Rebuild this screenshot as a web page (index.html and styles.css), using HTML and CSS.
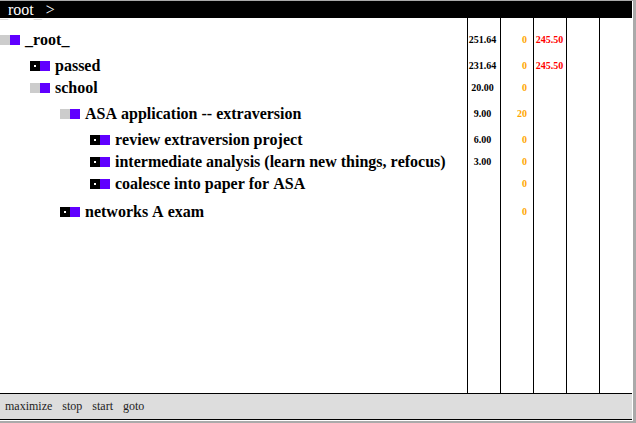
FILE: index.html
```html
<!DOCTYPE html>
<html lang="en">
<head>
    <meta charset="UTF-8">
    <meta name="viewport" content="width=device-width, initial-scale=1.0">
    <title>root</title>
    <link rel="stylesheet" href="styles.css">
</head>
<body>
    <div class="app">
        <div class="crumbs"><span class="crumb-us">_</span>root<span class="crumb-us">_</span> <span class="crumb-sep">&gt;</span></div>

        <div class="tree">
            <div class="row row-first">
                <div class="name"><span class="box box-open"></span><span class="box box-blue"></span><span class="label">_root_</span></div>
                <div class="cell num">251.64</div>
                <div class="cell zero">0</div>
                <div class="cell over">245.50</div>
                <div class="cell"></div>
                <div class="cell"></div>
            </div>
            <div class="row">
                <div class="name indent1"><span class="box box-leaf"></span><span class="box box-blue"></span><span class="label">passed</span></div>
                <div class="cell num">231.64</div>
                <div class="cell zero">0</div>
                <div class="cell over">245.50</div>
                <div class="cell"></div>
                <div class="cell"></div>
            </div>
            <div class="row">
                <div class="name indent1"><span class="box box-open"></span><span class="box box-blue"></span><span class="label">school</span></div>
                <div class="cell num">20.00</div>
                <div class="cell zero">0</div>
                <div class="cell"></div>
                <div class="cell"></div>
                <div class="cell"></div>
            </div>
            <div class="row row-gap4">
                <div class="name indent2"><span class="box box-open"></span><span class="box box-blue"></span><span class="label">ASA application -- extraversion</span></div>
                <div class="cell num">9.00</div>
                <div class="cell zero">20</div>
                <div class="cell"></div>
                <div class="cell"></div>
                <div class="cell"></div>
            </div>
            <div class="row row-gap4">
                <div class="name indent3"><span class="box box-leaf"></span><span class="box box-blue"></span><span class="label">review extraversion project</span></div>
                <div class="cell num">6.00</div>
                <div class="cell zero">0</div>
                <div class="cell"></div>
                <div class="cell"></div>
                <div class="cell"></div>
            </div>
            <div class="row">
                <div class="name indent3"><span class="box box-leaf"></span><span class="box box-blue"></span><span class="label">intermediate analysis (learn new things, refocus)</span></div>
                <div class="cell num">3.00</div>
                <div class="cell zero">0</div>
                <div class="cell"></div>
                <div class="cell"></div>
                <div class="cell"></div>
            </div>
            <div class="row">
                <div class="name indent3"><span class="box box-leaf"></span><span class="box box-blue"></span><span class="label">coalesce into paper for ASA</span></div>
                <div class="cell num"></div>
                <div class="cell zero">0</div>
                <div class="cell"></div>
                <div class="cell"></div>
                <div class="cell"></div>
            </div>
            <div class="row row-gap6">
                <div class="name indent2"><span class="box box-leaf"></span><span class="box box-blue"></span><span class="label">networks A exam</span></div>
                <div class="cell num"></div>
                <div class="cell zero">0</div>
                <div class="cell"></div>
                <div class="cell"></div>
                <div class="cell"></div>
            </div>
            <div class="row row-fill">
                <div class="name"></div>
                <div class="cell"></div>
                <div class="cell"></div>
                <div class="cell"></div>
                <div class="cell"></div>
                <div class="cell"></div>
            </div>
        </div>

        <div class="footer">
            <span>maximize</span>
            <span>stop</span>
            <span>start</span>
            <span>goto</span>
        </div>
    </div>
</body>
</html>
```

FILE: styles.css
```css
html, body {
    height: 100%;
    margin: 0;
}
body {
    background-color: #aaa;
    font-family: "Liberation Serif", "Times New Roman", serif;
    font-kerning: none;
    padding: 1px 3px 2px 0;
    box-sizing: border-box;
    overflow: hidden;
}
.app {
    display: flex;
    flex-direction: column;
    height: 100%;
    background: #fff;
    border-right: 1px solid #fff;
    border-bottom: 1px solid #fff;
    box-sizing: border-box;
}
.crumbs {
    height: 17px;
    line-height: 18px;
    background: #000;
    color: #fff;
    font-size: 16px;
    white-space: pre;
}
/* underscores hang just under the black bar */
.crumb-us {
    position: relative;
    top: 3px;
    color: #ddd;
}
.tree {
    flex: 1;
    display: flex;
    flex-direction: column;
    min-height: 0;
}
.row {
    display: flex;
    flex: none;
    height: 22px;
}
.row-first {
    height: 37px;
}
.row-first .name {
    padding-top: 11px;
    padding-bottom: 4px;
}
.row-first .cell {
    padding-top: 10px;
    padding-bottom: 5px;
}
.row-gap4 {
    height: 26px;
}
.row-gap4 .name {
    padding-top: 4px;
}
.row-gap4 .cell {
    padding-top: 4px;
}
.row-gap6 {
    height: 28px;
}
.row-gap6 .name {
    padding-top: 6px;
}
.row-gap6 .cell {
    padding-top: 6px;
}
.row-fill {
    flex: 1;
}
.name {
    flex: 1;
    display: flex;
    align-items: center;
    min-width: 0;
    font-size: 16px;
    font-weight: bold;
    color: #000;
    white-space: nowrap;
}
.indent1 { padding-left: 30px; }
.indent2 { padding-left: 60px; }
.indent3 { padding-left: 90px; }
.box {
    flex: none;
    width: 10px;
    height: 10px;
}
.box-open {
    background: #ccc;
}
.box-blue {
    background: #6000ff;
}
.box-leaf {
    background: #000;
    display: flex;
    align-items: center;
    justify-content: center;
}
.box-leaf::before {
    content: "";
    width: 2px;
    height: 2px;
    background: #fff;
}
.label {
    margin-left: 5px;
}
.cell {
    flex: none;
    width: 33px;
    box-sizing: border-box;
    padding-bottom: 2px;
    border-left: 1px solid #000;
    display: flex;
    align-items: center;
    font-size: 10px;
    font-weight: bold;
    white-space: nowrap;
}
.num {
    justify-content: center;
    padding-right: 3px;
    color: #000;
}
.zero {
    justify-content: flex-end;
    padding-right: 6px;
    color: #ffa500;
}
.over {
    justify-content: center;
    padding-right: 1px;
    color: #f00;
}
.footer {
    flex: none;
    height: 25px;
    display: flex;
    align-items: center;
    gap: 10px;
    padding-left: 5px;
    background: #ddd;
    border-top: 1px solid #000;
    border-bottom: 1px solid #000;
    color: #222;
    font-size: 12px;
}
```
